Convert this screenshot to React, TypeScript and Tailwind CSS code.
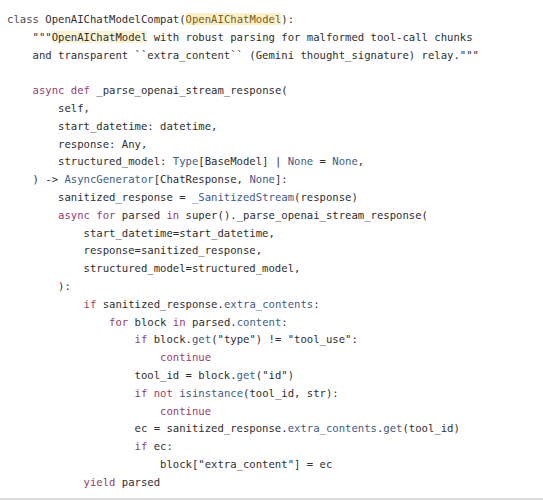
import React from "react";

type Seg = [string, string?];

const K = "k"; // keyword
const B = "b"; // blue name
const H = "h"; // highlighted class name
const HD = "hd"; // highlighted in docstring

const lines: Seg[][] = [
  [["class ", "c"], ["OpenAIChatModelCompat("], ["OpenAIChatModel", H], ["):"]],
  [["    \"\"\""], ["OpenAIChatModel", HD], [" with robust parsing for malformed tool-call chunks"]],
  [["    and transparent ``extra_content`` (Gemini thought_signature) relay.\"\"\""]],
  [],
  [["    "], ["async def", K], [" _parse_openai_stream_response("]],
  [["        self,"]],
  [["        start_datetime: datetime,"]],
  [["        response: Any,"]],
  [["        structured_model: "], ["Type", B], ["[BaseModel] | "], ["None", B], [" = "], ["None", B], [","]],
  [["    ) -> "], ["AsyncGenerator", B], ["[ChatResponse, "], ["None", B], ["]:"]],
  [["        sanitized_response = "], ["_SanitizedStream", B], ["(response)"]],
  [["        "], ["async for", K], [" parsed "], ["in", K], [" super()._parse_openai_stream_response("]],
  [["            start_datetime=start_datetime,"]],
  [["            response=sanitized_response,"]],
  [["            structured_model=structured_model,"]],
  [["        ):"]],
  [["            "], ["if", K], [" sanitized_response."], ["extra_contents", B], [":"]],
  [["                "], ["for", K], [" block "], ["in", K], [" parsed."], ["content", B], [":"]],
  [["                    "], ["if", K], [" block."], ["get", B], ["(\"type\") != \"tool_use\":"]],
  [["                        "], ["continue", K]],
  [["                    tool_id = block."], ["get", B], ["(\"id\")"]],
  [["                    "], ["if not", K], [" "], ["isinstance", B], ["(tool_id, str):"]],
  [["                        "], ["continue", K]],
  [["                    ec = sanitized_response."], ["extra_contents", B], ["."], ["get", B], ["(tool_id)"]],
  [["                    "], ["if", K], [" ec:"]],
  [["                        block[\"extra_content\"] = ec"]],
  [["            "], ["yield", K], [" parsed"]],
];

function cls(t?: string) {
  switch (t) {
    case "k":
      return "text-[#93406c]";
    case "b":
      return "text-[#3d5a88]";
    case "c":
      return "text-[#4a4a4a]";
    case "h":
      return "bg-[#fbf0c8] text-[#7b5a1c]";
    case "hd":
      return "bg-[#fcf3d4] text-[#2e2e2e]";
    default:
      return "text-[#2e2e2e]";
  }
}

export default function App() {
  return (
    <div className="w-[543px] h-[500px] bg-white overflow-hidden flex flex-col">
      <div
        className="flex-1 pt-[11px] pl-[7px] text-[10.6px] leading-[17.8px] whitespace-pre"
        style={{ fontFamily: '"DejaVu Sans Mono", "Liberation Mono", monospace' }}
      >
        {lines.map((segs, i) => (
          <div key={i} className="h-[17.8px]">
            {segs.map(([t, c], j) => (
              <span key={j} className={cls(c)}>
                {t}
              </span>
            ))}
          </div>
        ))}
      </div>
      <div className="h-[2px] bg-[#dcdcdc]" />
    </div>
  );
}
